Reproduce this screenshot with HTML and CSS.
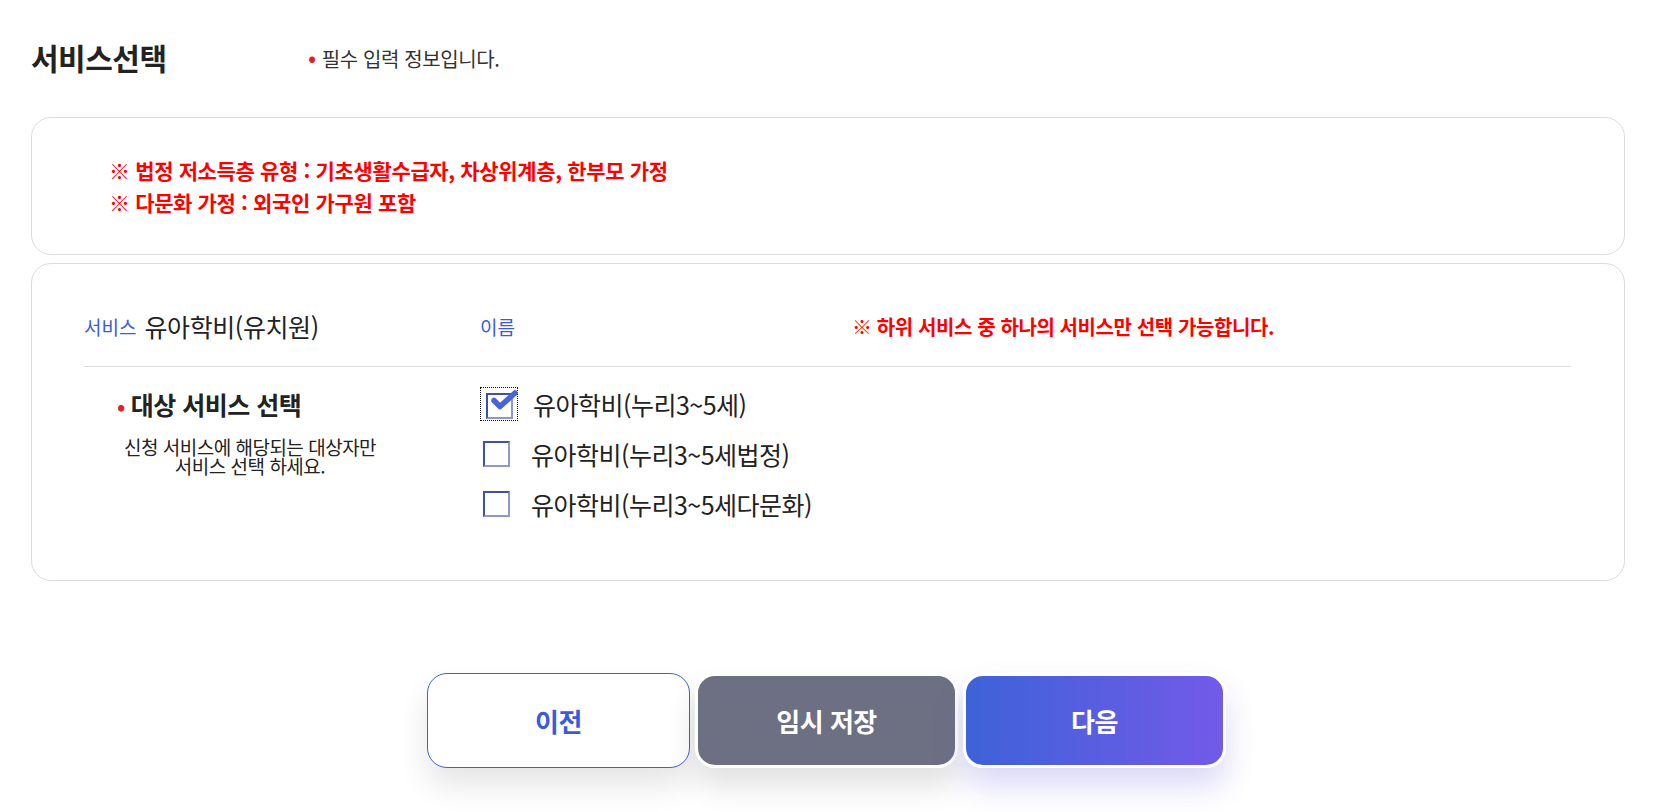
FILE: index.html
```html
<!DOCTYPE html>
<html lang="ko">
<head>
<meta charset="utf-8">
<title>서비스선택</title>
<link rel="stylesheet" href="styles.css">
</head>
<body>
<div class="page">
  <header class="head">
    <h1 class="title">서비스선택</h1>
    <p class="req"><span class="dot">•</span>필수 입력 정보입니다.</p>
  </header>

  <section class="card notice">
    <p>※ 법정 저소득층 유형 : 기초생활수급자, 차상위계층, 한부모 가정</p>
    <p>※ 다문화 가정 : 외국인 가구원 포함</p>
  </section>

  <section class="card form">
    <div class="row top">
      <div class="cell"><span class="lbl">서비스</span><span class="val">유아학비(유치원)</span></div>
      <div class="cell"><span class="lbl">이름</span></div>
      <div class="cell"><span class="warn">※ 하위 서비스 중 하나의 서비스만 선택 가능합니다.</span></div>
    </div>
    <div class="row sel">
      <div class="side">
        <h2 class="sub"><span class="dot">•</span>대상 서비스 선택</h2>
        <p class="desc"><span class="dl">신청 서비스에 해당되는 대상자만</span><span class="dl">서비스 선택 하세요.</span></p>
      </div>
      <ul class="opts">
        <li class="opt checked">
          <span class="focus"><span class="box"><svg class="tick" viewBox="0 0 30 24" width="30" height="24"><path d="M5 11.5 L11 17.5 L26 4" fill="none" stroke="#4a63da" stroke-width="5.5" stroke-linecap="round" stroke-linejoin="round"/></svg></span></span>
          <span class="otxt">유아학비(누리3~5세)</span>
        </li>
        <li class="opt"><span class="box"></span><span class="otxt">유아학비(누리3~5세법정)</span></li>
        <li class="opt"><span class="box"></span><span class="otxt">유아학비(누리3~5세다문화)</span></li>
      </ul>
    </div>
  </section>

  <nav class="btns">
    <button class="btn prev">이전</button>
    <button class="btn save">임시 저장</button>
    <button class="btn next">다음</button>
  </nav>
</div>
</body>
</html>
```
FILE: styles.css
```css
* { box-sizing: border-box; }
html, body { margin: 0; padding: 0; background: #fff; }
body {
  font-family: "Noto Sans CJK KR", "Noto Sans", sans-serif;
  color: #222;
}
.page { width: 1594px; margin-left: 31px; padding-bottom: 45px; }

.head { display: flex; align-items: center; height: 117px; padding-bottom: 4px; }
.title { margin: 0; width: 277px; font-size: 30px; font-weight: 700; letter-spacing: -0.5px; color: #222; }
.req { margin: 0; font-size: 20px; color: #333; letter-spacing: -0.4px; }
.req .dot { font-size: 24px; margin-right: 6px; }
.dot { color: #e0212b; margin-right: 5px; }

.card { border: 1px solid #dcdcdc; border-radius: 20px; background: #fff; }
.notice { height: 138px; padding: 36px 0 0 77px; margin-bottom: 8px; }
.notice p { margin: 0; line-height: 32px; font-size: 21px; font-weight: 700; color: #ff0000; letter-spacing: -0.35px; }

.form { height: 318px; padding: 42px 53px 0 52px; }
.row.top {
  display: grid; grid-template-columns: 396px 372px 1fr;
  align-items: center; height: 40px; box-sizing: content-box;
  padding-bottom: 20px; border-bottom: 1px solid #dcdcdc;
}
.cell { display: flex; align-items: center; }
.lbl { font-size: 19px; color: #3b5bdb; margin-left: 0; }
.val { font-size: 25px; color: #222; margin-left: 8px; letter-spacing: -0.4px; }
.warn { font-size: 20px; font-weight: 700; color: #ff0000; letter-spacing: -0.4px; }

.row.sel { display: grid; grid-template-columns: 396px 1fr; padding-top: 12px; }
.side { width: 332px; }
.sub { margin: 10px 0 0 33px; font-size: 25px; font-weight: 700; line-height: 30px; letter-spacing: -0.5px; color: #222; }
.sub .dot { margin-right: 6px; font-size: 22px; }
.desc { margin: 17px 0 0; text-align: center; font-size: 19px; letter-spacing: -0.5px; color: #222; }
.dl { display: block; height: 19px; line-height: 19px; }

.opts { list-style: none; margin: 0; padding: 0; }
.opt { display: flex; align-items: center; height: 50px; font-size: 25px; letter-spacing: -0.5px; color: #222; }
.box {
  position: relative; flex: none; width: 27px; height: 26px; margin-left: 3px;
  border: 2px solid; border-color: #3f51a5 #8f99c9 #8f99c9 #3f51a5;
  background: #fff;
}
.otxt { margin-left: 21px; }
.focus { flex: none; display: flex; align-items: center; justify-content: center; width: 36px; height: 32px; margin-left: 1px; outline: 1px dotted #111; margin-right: -2px; }
.focus .box { margin-left: 0; margin-top: 3px; }
.opt.checked .otxt { margin-left: 18px; }
.tick { position: absolute; left: 1px; top: -6px; }

.btns { display: flex; justify-content: center; gap: 5px; margin-top: 92px; padding-right: 3px; }
.btn {
  width: 263px; height: 95px; border-radius: 20px;
  font-family: inherit; font-size: 26px; font-weight: 700; letter-spacing: -0.5px;
  cursor: pointer;
}
.prev { background: #fff; color: #3b5bdb; border: 1px solid #4060d8; box-shadow: 0 18px 30px rgba(0,0,0,0.10); }
.save { background: #6d7083; color: #fff; border: 3px solid #fff; box-shadow: 0 18px 30px rgba(0,0,0,0.12); }
.next { background: linear-gradient(90deg, #3d62d8, #735ae8); color: #fff; border: 3px solid #fff; box-shadow: 0 18px 30px rgba(90,80,220,0.22); }
```
